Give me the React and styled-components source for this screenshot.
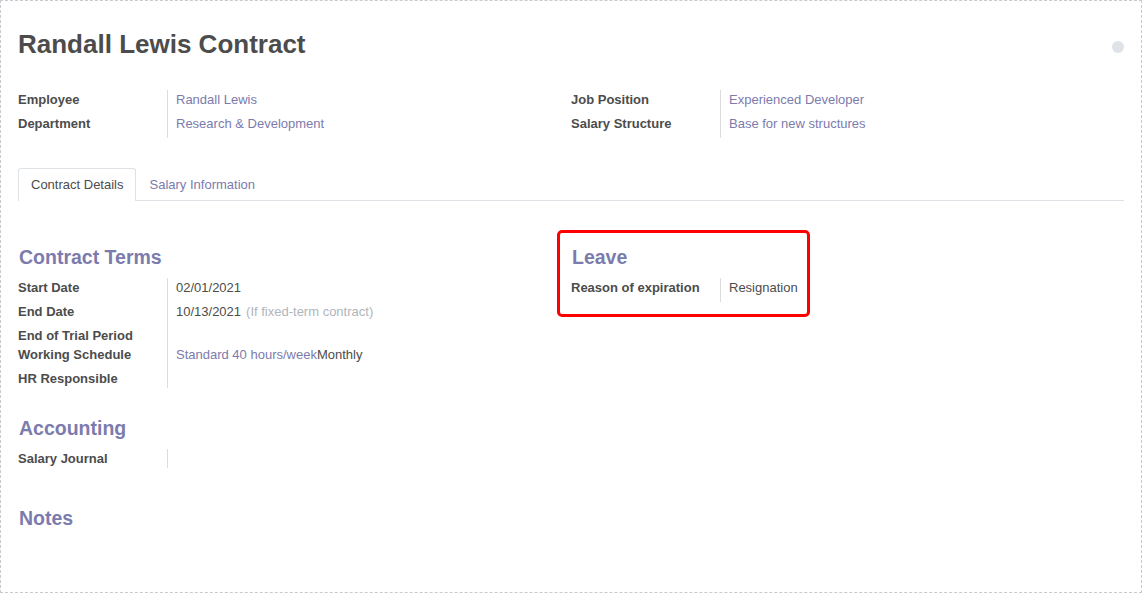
import React from "react";
import styled, { createGlobalStyle } from "styled-components";

const Global = createGlobalStyle`
  html, body { margin: 0; padding: 0; background: #fff; }
  body { font-family: "Liberation Sans", Arial, sans-serif; }
  * { box-sizing: border-box; }
`;

const Sheet = styled.div`
  width: 1142px;
  height: 593px;
  border: 1px dashed #c9c9cf;
  padding: 27px 17px 0 17px;
  color: #4c4c4c;
  font-size: 13px;
`;

const Header = styled.div`
  display: flex;
  align-items: center;
  justify-content: space-between;
  height: 32px;
`;

const Title = styled.h1`
  margin: 0;
  font-size: 26px;
  line-height: 32px;
  font-weight: 700;
  color: #4c4c4c;
`;

const StatusDot = styled.span`
  width: 12px;
  height: 12px;
  border-radius: 50%;
  background: #dfe2e6;
  margin-top: 6px;
`;

const Columns = styled.div`
  display: grid;
  grid-template-columns: 553px 1fr;
  margin-top: ${(p) => p.$top || 0}px;
`;

const Group = styled.div`
  display: flex;
  flex-direction: column;
  align-items: flex-start;
`;

const FieldTable = styled.div`
  display: grid;
  grid-template-columns: 150px auto;
`;

const Label = styled.div`
  font-weight: 700;
  line-height: 19px;
  padding-bottom: ${(p) => (p.$compact ? 0 : 5)}px;
  border-right: 1px solid #dcdcdc;
  white-space: nowrap;
`;

const Value = styled.div`
  line-height: 19px;
  padding-left: 8px;
  padding-bottom: ${(p) => (p.$compact ? 0 : 5)}px;
  white-space: nowrap;
  color: ${(p) => (p.$link ? "#7c7bad" : "#4c4c4c")};
`;

const Hint = styled.span`
  color: #b1b5bb;
  margin-left: 5px;
`;

const Plain = styled.span`
  color: #4c4c4c;
`;

const Tabs = styled.div`
  display: flex;
  margin-top: 30px;
  height: 33px;
  border-bottom: 1px solid #dee2e6;
`;

const Tab = styled.div`
  height: 33px;
  padding: 0 12px;
  line-height: 31px;
  border: 1px solid ${(p) => (p.$active ? "#dee2e6" : "transparent")};
  border-bottom: none;
  border-radius: 3px 3px 0 0;
  background: ${(p) => (p.$active ? "#fff" : "transparent")};
  margin-bottom: ${(p) => (p.$active ? -1 : 0)}px;
  color: ${(p) => (p.$active ? "#4c4c4c" : "#7c7bad")};
`;

const SectionTitle = styled.h2`
  margin: 0 0 9px 1px;
  font-size: 19.5px;
  line-height: 24px;
  font-weight: 700;
  color: #7c7bad;
`;

const Section = styled.div`
  margin-top: ${(p) => p.$top || 0}px;
`;

const Highlight = styled.div`
  position: relative;
  &::after {
    content: "";
    position: absolute;
    top: -15px;
    left: -14px;
    right: -12px;
    bottom: -15px;
    border: 3px solid #f00;
    border-radius: 5px;
    pointer-events: none;
  }
`;

function Fields({ rows }) {
  return (
    <FieldTable>
      {rows.map((r, i) => (
        <React.Fragment key={i}>
          <Label $compact={r.compact}>{r.label}</Label>
          <Value $compact={r.compact} $link={r.link}>
            {r.value}
          </Value>
        </React.Fragment>
      ))}
    </FieldTable>
  );
}

export default function App() {
  return (
    <>
      <Global />
      <Sheet>
        <Header>
          <Title>Randall Lewis Contract</Title>
          <StatusDot />
        </Header>

        <Columns $top={30}>
          <Group>
            <Fields
              rows={[
                { label: "Employee", value: "Randall Lewis", link: true },
                { label: "Department", value: "Research & Development", link: true },
              ]}
            />
          </Group>
          <Group>
            <Fields
              rows={[
                { label: "Job Position", value: "Experienced Developer", link: true },
                { label: "Salary Structure", value: "Base for new structures", link: true },
              ]}
            />
          </Group>
        </Columns>

        <Tabs>
          <Tab $active>Contract Details</Tab>
          <Tab>Salary Information</Tab>
        </Tabs>

        <Columns $top={44}>
          <Group>
            <SectionTitle>Contract Terms</SectionTitle>
            <Fields
              rows={[
                { label: "Start Date", value: "02/01/2021" },
                {
                  label: "End Date",
                  value: (
                    <>
                      10/13/2021<Hint>(If fixed-term contract)</Hint>
                    </>
                  ),
                },
                { label: "End of Trial Period", value: "", compact: true },
                {
                  label: "Working Schedule",
                  value: (
                    <>
                      Standard 40 hours/week<Plain>Monthly</Plain>
                    </>
                  ),
                  link: true,
                },
                { label: "HR Responsible", value: "", compact: true },
              ]}
            />
          </Group>
          <Group>
            <Highlight>
              <SectionTitle>Leave</SectionTitle>
              <Fields rows={[{ label: "Reason of expiration", value: "Resignation" }]} />
            </Highlight>
          </Group>
        </Columns>

        <Section $top={28}>
          <SectionTitle>Accounting</SectionTitle>
          <Fields rows={[{ label: "Salary Journal", value: "", compact: true }]} />
        </Section>

        <Section $top={38}>
          <SectionTitle>Notes</SectionTitle>
        </Section>
      </Sheet>
    </>
  );
}
